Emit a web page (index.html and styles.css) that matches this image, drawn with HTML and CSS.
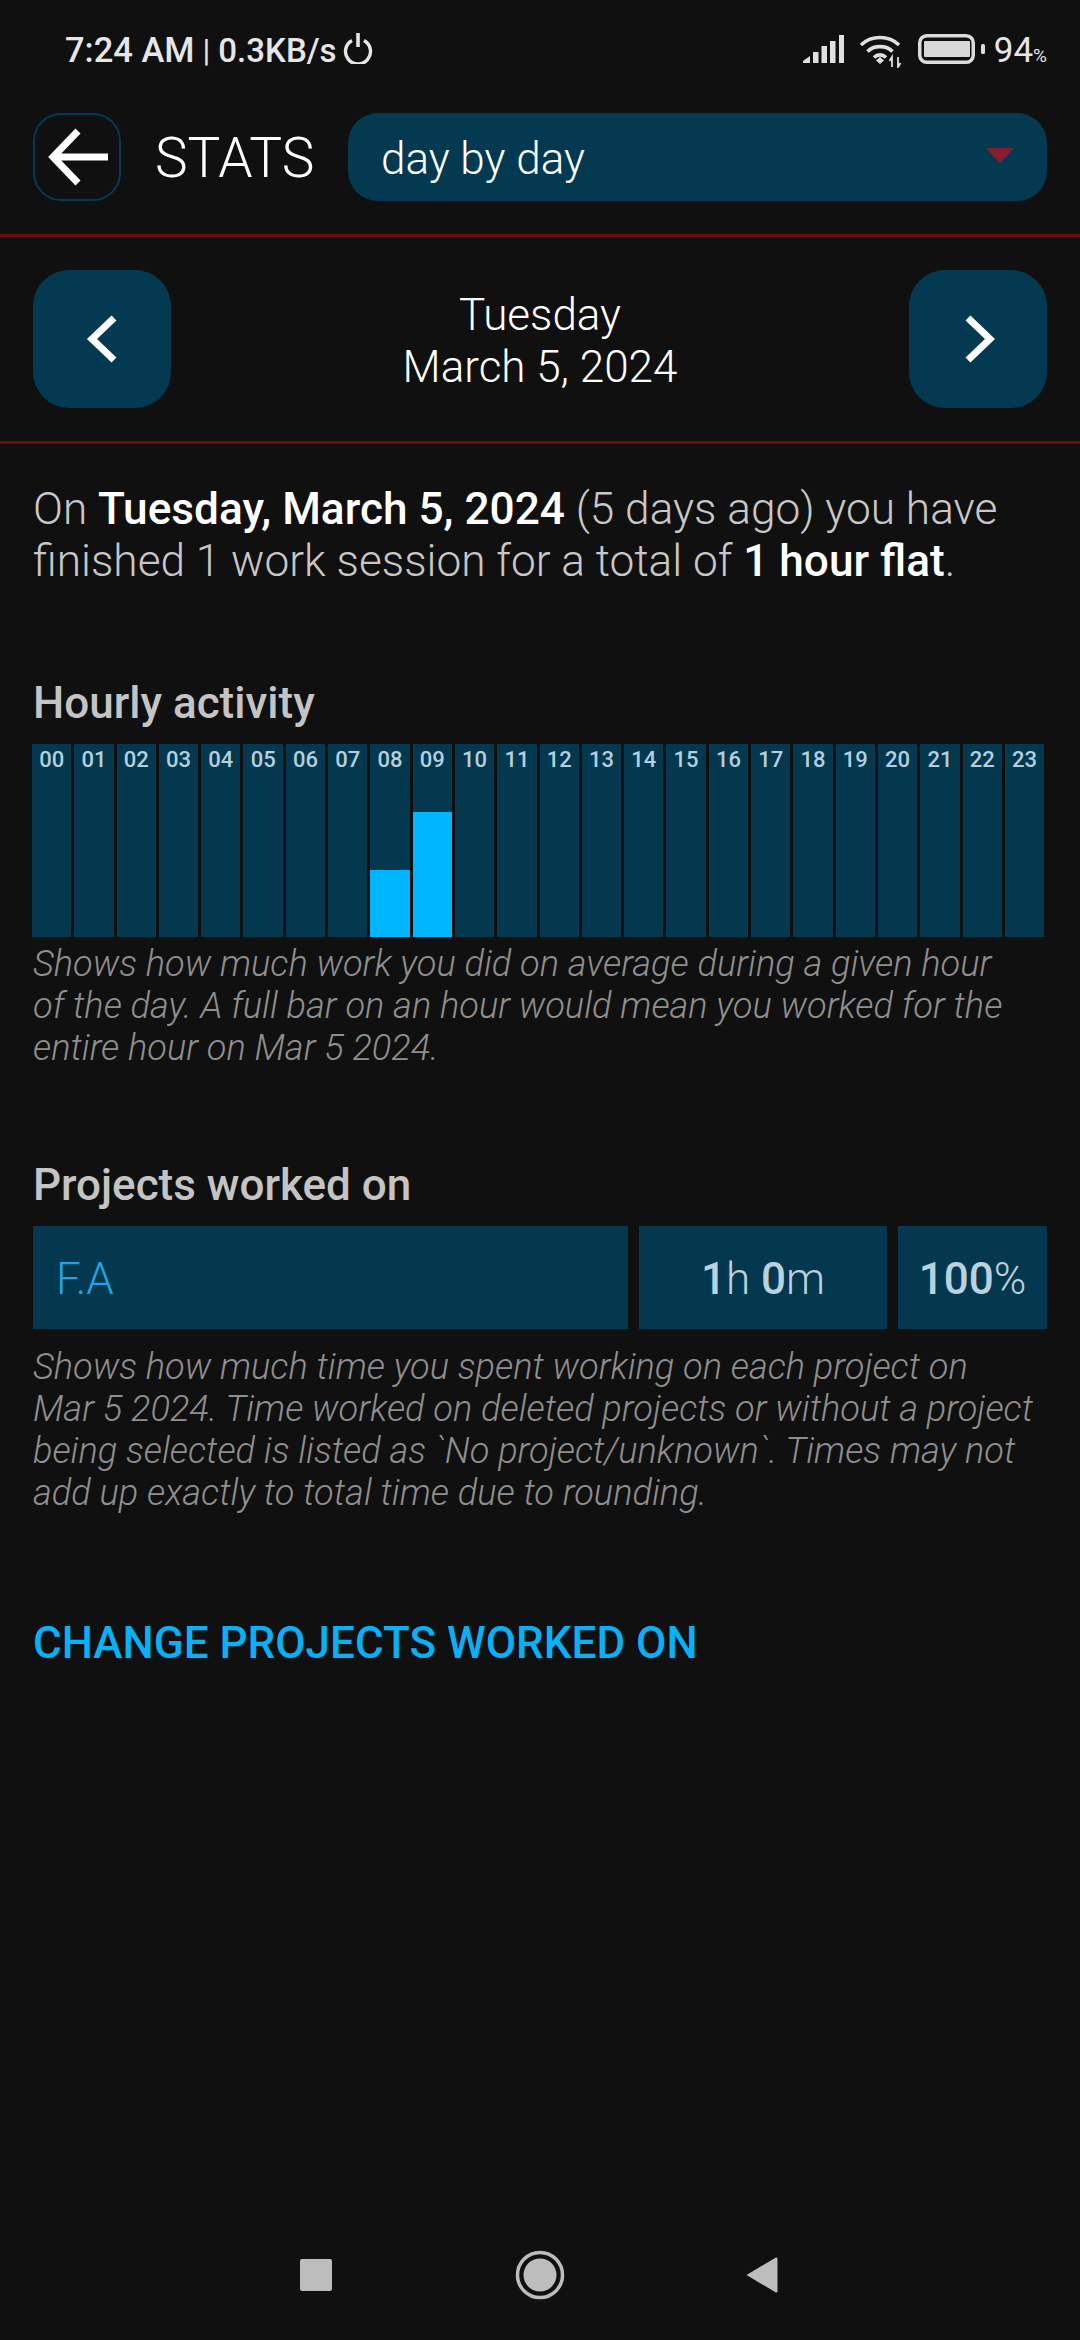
FILE: index.html
```html
<!DOCTYPE html>
<html>
  <head>
    <title>Stats</title>
    <link rel="stylesheet" href="styles.css">
  </head>
  <body>
    <div class="status-bar">
      <div class="status-left">
        <span class="clock">7:24 AM</span>
        <span class="status-sep">|</span>
        <span class="speed">0.3KB/s</span>
        <svg class="power-icon" width="30" height="32" viewBox="0 0 30 32">
          <path d="M9 8.500a12.500 12.500 0 1 0 12 0" fill="none" stroke="#e6e6e6" stroke-width="3.400"/>
          <path d="M15 1v14" stroke="#e6e6e6" stroke-width="3.600"/>
        </svg>
      </div>
      <div class="status-right">
        <svg class="signal-icon" width="41" height="30" viewBox="0 0 41 30">
          <path d="M0 29v-2l7-5v7z M10 18h5.500v11H10z M18.500 12h5.500v17h-5.500z M27 7h5.500v22H27z M36 1h5v28h-5z" fill="#e0e0e0"/>
        </svg>
        <svg class="wifi-icon" width="44" height="36" viewBox="0 0 44 36">
          <path d="M2 13C12 3 30 3 40 13" fill="none" stroke="#e0e0e0" stroke-width="3.600"/>
          <path d="M8.500 19.500C15 13 27 13 33.500 19.500" fill="none" stroke="#e0e0e0" stroke-width="3.600"/>
          <path d="M15 25.500C18.500 22 23.500 22 27 25.500" fill="none" stroke="#e0e0e0" stroke-width="3.600"/>
          <path d="M17 28.500l4-3.500 4 3.500-4 3.500z" fill="#e0e0e0"/>
          <path d="M33 35V25l-2.500 4 M39 25v10l2.500-4" fill="none" stroke="#e0e0e0" stroke-width="1.800"/>
        </svg>
        <svg class="battery-icon" width="68" height="30" viewBox="0 0 68 30">
          <rect x="1.750" y="1.750" width="53.500" height="26.500" rx="7" fill="none" stroke="#dcdcdc" stroke-width="3.500"/>
          <rect x="6" y="7" width="46" height="16" rx="1" fill="#d8d8d8"/>
          <rect x="63" y="10" width="4" height="10" rx="1.500" fill="#dcdcdc"/>
        </svg>
        <span class="battery-level">94<span class="battery-pct">%</span></span>
      </div>
    </div>

    <div class="top-bar">
      <button class="back-btn">
        <svg width="62" height="62" viewBox="0 0 62 62">
          <path d="M32 5L7 31l25 26 M7 31h56" fill="none" stroke="#fff" stroke-width="7"/>
        </svg>
      </button>
      <div class="page-title">STATS</div>
      <div class="mode-select">
        <span>day by day</span>
        <span class="mode-arrow"></span>
      </div>
    </div>

    <div class="date-bar">
      <button class="date-btn">
        <svg width="34" height="48" viewBox="0 0 34 48">
          <path d="M29 3L7 24l22 21" fill="none" stroke="#fff" stroke-width="7"/>
        </svg>
      </button>
      <div class="date-label">Tuesday<br>March 5, 2024</div>
      <button class="date-btn">
        <svg width="34" height="48" viewBox="0 0 34 48">
          <path d="M7 3l22 21L7 45" fill="none" stroke="#fff" stroke-width="7"/>
        </svg>
      </button>
    </div>

    <main class="content">
      <p class="summary">On <b>Tuesday, March 5, 2024</b> (5 days ago) you have finished 1 work session for a total of <b>1 hour flat</b>.</p>

      <h2 class="section-title hourly-title">Hourly activity</h2>
      <div class="hours">
        <div class="hour"><span>00</span></div>
        <div class="hour"><span>01</span></div>
        <div class="hour"><span>02</span></div>
        <div class="hour"><span>03</span></div>
        <div class="hour"><span>04</span></div>
        <div class="hour"><span>05</span></div>
        <div class="hour"><span>06</span></div>
        <div class="hour"><span>07</span></div>
        <div class="hour"><span>08</span><div class="hour-fill" style="height: 67px"></div></div>
        <div class="hour"><span>09</span><div class="hour-fill" style="height: 125px"></div></div>
        <div class="hour"><span>10</span></div>
        <div class="hour"><span>11</span></div>
        <div class="hour"><span>12</span></div>
        <div class="hour"><span>13</span></div>
        <div class="hour"><span>14</span></div>
        <div class="hour"><span>15</span></div>
        <div class="hour"><span>16</span></div>
        <div class="hour"><span>17</span></div>
        <div class="hour"><span>18</span></div>
        <div class="hour"><span>19</span></div>
        <div class="hour"><span>20</span></div>
        <div class="hour"><span>21</span></div>
        <div class="hour"><span>22</span></div>
        <div class="hour"><span>23</span></div>
      </div>
      <p class="hint">Shows how much work you did on average during a given hour<br>of the day. A full bar on an hour would mean you worked for the entire hour on Mar 5 2024.</p>

      <h2 class="section-title projects-title">Projects worked on</h2>
      <div class="project-row">
        <div class="project-name">F.A</div>
        <div class="project-time"><b>1</b>h <b>0</b>m</div>
        <div class="project-pct"><b>100</b>%</div>
      </div>
      <p class="hint project-hint">Shows how much time you spent working on each project on Mar 5 2024. Time worked on deleted projects or without a project being selected is listed as `No project/unknown`. Times may not add up exactly to total time due to rounding.</p>

      <div class="change-link">CHANGE PROJECTS WORKED ON</div>
    </main>

    <div class="nav-bar">
      <svg class="nav-recent" width="34" height="34" viewBox="0 0 34 34">
        <rect x="1" y="1" width="32" height="32" rx="2" fill="#bdbdbd"/>
      </svg>
      <svg class="nav-home" width="50" height="50" viewBox="0 0 50 50">
        <circle cx="25" cy="25" r="22.500" fill="none" stroke="#bdbdbd" stroke-width="3.500"/>
        <circle cx="25" cy="25" r="16.500" fill="#bdbdbd"/>
      </svg>
      <svg width="34" height="38" viewBox="0 0 34 38">
        <path d="M1.500 19L31 1.500q1.500-.5 1.500 1.500v32q0 2-1.500 1.500z" fill="#bdbdbd"/>
      </svg>
    </div>
  </body>
</html>
```
FILE: styles.css
```css
* {
  box-sizing: border-box;
}
html,
body {
  margin: 0;
  padding: 0;
}
body {
  width: 1080px;
  height: 2340px;
  display: flex;
  flex-direction: column;
  background-color: #101010;
  color: #fff;
  font-family: Roboto, "Liberation Sans", sans-serif;
  font-weight: 300;
  overflow: hidden;
}
button {
  padding: 0;
  border: none;
  display: flex;
  align-items: center;
  justify-content: center;
}
b {
  font-weight: 500;
}

.status-bar {
  height: 113px;
  padding: 32px 33px 0 65px;
  display: flex;
  justify-content: space-between;
  align-items: flex-start;
  color: #e6e6e6;
  font-weight: 500;
}
.status-left {
  display: flex;
  align-items: center;
  height: 36px;
  font-size: 34.500px;
}
.status-sep {
  margin: 0 8px;
  font-size: 32px;
  font-weight: 400;
}
.speed {
  font-size: 33px;
}
.power-icon {
  margin-left: 6px;
  margin-top: -4px;
}
.status-right {
  display: flex;
  align-items: center;
  height: 36px;
}
.signal-icon {
  margin-right: 15px;
  margin-top: -3px;
}
.wifi-icon {
  margin-right: 15px;
}
.battery-icon {
  margin-right: 8px;
  margin-top: -2px;
}
.battery-level {
  font-size: 35px;
  font-weight: 400;
}
.battery-pct {
  font-size: 19px;
}

.top-bar {
  height: 124px;
  padding: 0 33px;
  display: flex;
  align-items: flex-start;
  border-bottom: 3px solid #6b0a0a;
}
.back-btn {
  width: 88px;
  height: 88px;
  background: none;
  border: 2.5px solid #033a52;
  border-radius: 28px;
}
.page-title {
  width: 227px;
  height: 88px;
  padding-left: 34px;
  font-size: 55px;
  line-height: 90px;
}
.mode-select {
  flex: 1;
  height: 88px;
  padding: 3px 33px 0;
  display: flex;
  align-items: center;
  justify-content: space-between;
  background-color: #033a52;
  border-radius: 30px;
  font-size: 44px;
}
.mode-arrow {
  width: 0;
  height: 0;
  border-left: 14px solid transparent;
  border-right: 14px solid transparent;
  border-top: 15px solid #8a1c2f;
  margin-top: -6px;
}

.date-bar {
  height: 207px;
  padding: 33px 33px 0;
  display: flex;
  justify-content: space-between;
  align-items: flex-start;
  border-bottom: 3px solid #6b0a0a;
}
.date-btn {
  width: 138px;
  height: 138px;
  background-color: #033a52;
  border-radius: 36px;
}
.date-label {
  padding-top: 19px;
  text-align: center;
  font-size: 44px;
  line-height: 52px;
}

.content {
  flex: 1;
  padding: 0 33px;
}
.summary {
  margin: 39px 0 0;
  font-size: 44.200px;
  line-height: 52px;
  color: #c8c8c8;
}
.summary b {
  color: #fff;
}
.section-title {
  margin: 0;
  font-size: 44px;
  line-height: 52px;
  font-weight: 500;
  color: #c4c4c4;
}
.hourly-title {
  margin-top: 90px;
}
.projects-title {
  margin-top: 90px;
}

.hours {
  margin: 15px 0 0 -1px;
  width: 1012px;
  height: 193px;
  display: flex;
  gap: 3px;
}
.hour {
  flex: 1;
  position: relative;
  background-color: #03384f;
  text-align: center;
  font-size: 22px;
  font-weight: 500;
  line-height: 32px;
  color: #b4d0de;
}
.hour-fill {
  position: absolute;
  left: 0;
  right: 0;
  bottom: 0;
  background-color: #00b7ff;
}
.hint {
  margin: 6px 0 0;
  padding-right: 14px;
  font-size: 36.200px;
  line-height: 42px;
  font-style: italic;
  color: #8f8f8f;
}
.project-hint {
  margin-top: 17px;
}

.project-row {
  margin-top: 15px;
  height: 103px;
  display: flex;
  gap: 11px;
  font-size: 44px;
  line-height: 107px;
  color: #b9d2de;
}
.project-name {
  width: 595px;
  padding-left: 23px;
  background-color: #03384f;
  color: #22a2e0;
}
.project-time {
  width: 248px;
  background-color: #03384f;
  text-align: center;
}
.project-pct {
  flex: 1;
  background-color: #03384f;
  text-align: center;
}
.change-link {
  margin-top: 103px;
  font-size: 44px;
  line-height: 52px;
  font-weight: 500;
  color: #0ab0f5;
}

.nav-bar {
  height: 130px;
  padding-left: 299px;
  display: flex;
  align-items: center;
}
.nav-recent {
  margin-right: 182px;
}
.nav-home {
  margin-right: 180px;
}
```
